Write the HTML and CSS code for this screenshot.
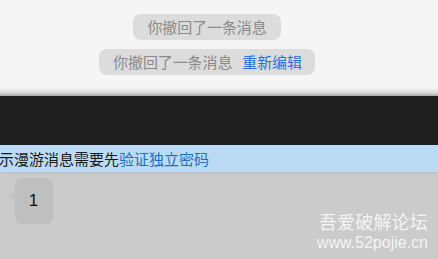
FILE: index.html
```html
<!DOCTYPE html>
<html>
<head>
<meta charset="utf-8">
<link rel="stylesheet" href="styles.css">
</head>
<body>
<div class="top">
  <div class="notice"><span class="gray">你撤回了一条消息</span></div>
  <div class="notice second"><span class="gray">你撤回了一条消息</span><span class="link">重新编辑</span></div>
</div>
<div class="shade"></div>
<div class="dark"></div>
<div class="tipbar"><span class="tiptext">示漫游消息需要先</span><span class="tiplink">验证独立密码</span></div>
<div class="chat">
  <div class="msg">
    <div class="bubble">1</div>
  </div>
  <div class="watermark">
    <div class="wm-cn">吾爱破解论坛</div>
    <div class="wm-en">www.52pojie.cn</div>
  </div>
</div>
</body>
</html>
```

FILE: styles.css
```css
html, body {
  margin: 0;
  padding: 0;
  width: 438px;
  height: 259px;
  overflow: hidden;
  font-family: "Noto Sans CJK SC", "Noto Sans", sans-serif;
}
.top {
  background: #f5f5f5;
  height: 88px;
  display: flex;
  flex-direction: column;
  align-items: center;
  padding: 14px 24px 0 0;
  box-sizing: border-box;
  gap: 9px;
}
.notice {
  background: #dcdcdc;
  border-radius: 8px;
  height: 26px;
  padding: 0 14px;
  display: flex;
  align-items: center;
  font-size: 15px;
  line-height: 26px;
  letter-spacing: -0.1px;
}
.second {
  padding: 0 13px 0 14px;
}
.gray { color: #8a8a8a; }
.link { color: #2a6fdb; margin-left: 10px; }
.shade {
  height: 8px;
  background: linear-gradient(#f2f2f2, #d8d8d8 60%, #a8a8a8);
}
.dark {
  height: 49px;
  background: #1f1f1f;
}
.tipbar {
  height: 27px;
  background: #bbdaf6;
  font-size: 15px;
  line-height: 27px;
  white-space: nowrap;
  text-indent: -1px;
  box-shadow: 0 1px 2px rgba(0,0,0,0.08);
  position: relative;
}
.tiptext { color: #1a1a1a; }
.tiplink { color: #1f6fc0; }
.chat {
  height: 87px;
  background: #cbcbcb;
  display: flex;
  justify-content: space-between;
}
.msg {
  padding: 6px 0 0 15px;
}
.bubble {
  position: relative;
  width: 38px;
  height: 46px;
  background: #bfbfbf;
  border-radius: 7px;
  color: #111;
  font-family: "Liberation Sans", sans-serif;
  font-size: 17px;
  display: flex;
  align-items: center;
  justify-content: center;
  padding-right: 1px;
  box-sizing: border-box;
}
.bubble::before {
  content: "";
  position: absolute;
  left: -8px;
  top: 14px;
  width: 0;
  height: 0;
  border-top: 4px solid transparent;
  border-bottom: 4px solid transparent;
  border-right: 8px solid #c3c3c3;
}
.watermark {
  padding: 38px 10px 0 0;
  display: flex;
  flex-direction: column;
  align-items: flex-end;
  color: #f4f4f4;
}
.wm-cn {
  font-size: 18px;
  line-height: 22px;
  letter-spacing: 0.2px;
}
.wm-en {
  font-family: "Liberation Sans", sans-serif;
  font-size: 16px;
  line-height: 18px;
  margin-top: 2px;
}
```
